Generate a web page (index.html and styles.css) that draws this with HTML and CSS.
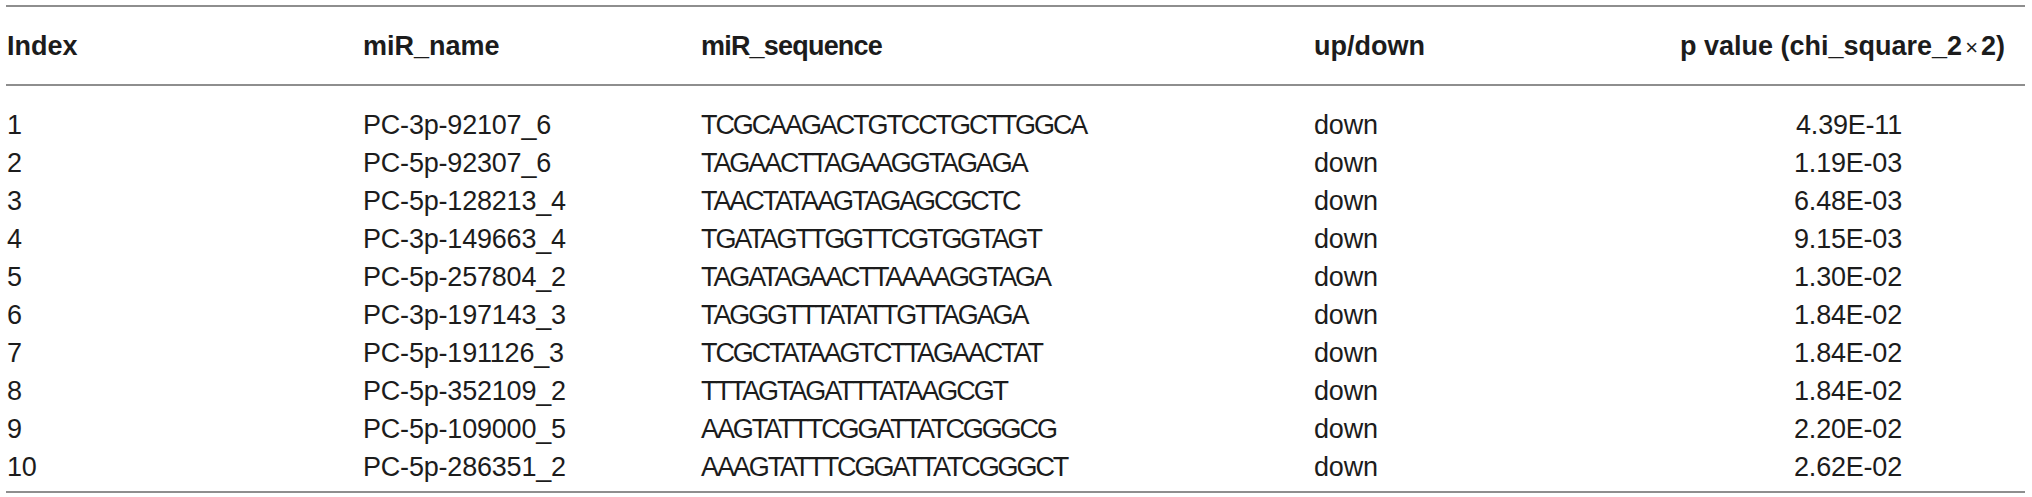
FILE: index.html
```html
<!DOCTYPE html>
<html>
<head>
<meta charset="utf-8">
<link rel="stylesheet" href="styles.css">
</head>
<body>
<table class="mir-table">
  <colgroup>
    <col class="c-index">
    <col class="c-name">
    <col class="c-seq">
    <col class="c-updown">
    <col class="c-p">
  </colgroup>
  <thead>
    <tr>
      <th>Index</th>
      <th>miR_name</th>
      <th class="seq-head">miR_sequence</th>
      <th>up/down</th>
      <th class="pcol">p value (chi_square_2<span class="times">×</span>2)</th>
    </tr>
  </thead>
  <tbody>
    <tr><td>1</td><td>PC-3p-92107_6</td><td class="seq">TCGCAAGACTGTCCTGCTTGGCA</td><td>down</td><td class="pcol">4.39E-11</td></tr>
    <tr><td>2</td><td>PC-5p-92307_6</td><td class="seq">TAGAACTTAGAAGGTAGAGA</td><td>down</td><td class="pcol">1.19E-03</td></tr>
    <tr><td>3</td><td>PC-5p-128213_4</td><td class="seq">TAACTATAAGTAGAGCGCTC</td><td>down</td><td class="pcol">6.48E-03</td></tr>
    <tr><td>4</td><td>PC-3p-149663_4</td><td class="seq">TGATAGTTGGTTCGTGGTAGT</td><td>down</td><td class="pcol">9.15E-03</td></tr>
    <tr><td>5</td><td>PC-5p-257804_2</td><td class="seq">TAGATAGAACTTAAAAGGTAGA</td><td>down</td><td class="pcol">1.30E-02</td></tr>
    <tr><td>6</td><td>PC-3p-197143_3</td><td class="seq">TAGGGTTTATATTGTTAGAGA</td><td>down</td><td class="pcol">1.84E-02</td></tr>
    <tr><td>7</td><td>PC-5p-191126_3</td><td class="seq">TCGCTATAAGTCTTAGAACTAT</td><td>down</td><td class="pcol">1.84E-02</td></tr>
    <tr><td>8</td><td>PC-5p-352109_2</td><td class="seq">TTTAGTAGATTTATAAGCGT</td><td>down</td><td class="pcol">1.84E-02</td></tr>
    <tr><td>9</td><td>PC-5p-109000_5</td><td class="seq">AAGTATTTCGGATTATCGGGCG</td><td>down</td><td class="pcol">2.20E-02</td></tr>
    <tr><td>10</td><td>PC-5p-286351_2</td><td class="seq">AAAGTATTTCGGATTATCGGGCT</td><td>down</td><td class="pcol">2.62E-02</td></tr>
  </tbody>
</table>
</body>
</html>
```

FILE: styles.css
```css
html, body {
  margin: 0;
  padding: 0;
  background: #ffffff;
}

body {
  font-family: "Liberation Sans", Arial, sans-serif;
  color: #1c1c1c;
}

.mir-table {
  margin: 5px 0 0 6px;
  width: 2019px;
  table-layout: fixed;
  border-collapse: collapse;
  font-size: 27px;
  line-height: 38px;
}

.c-index { width: 356px; }
.c-name { width: 338px; }
.c-seq { width: 613px; }
.c-updown { width: 360px; }
.c-p { width: 352px; }

.mir-table th,
.mir-table td {
  padding: 0 0 0 1px;
  text-align: left;
  white-space: nowrap;
  vertical-align: top;
}

.mir-table td {
  letter-spacing: -0.2px;
}

.mir-table th {
  font-weight: bold;
  padding-top: 20px;
  padding-bottom: 17px;
  border-top: 2px solid #8e8e8e;
  border-bottom: 2px solid #8e8e8e;
}

.mir-table th.seq-head {
  letter-spacing: -0.8px;
}

.mir-table td.seq {
  letter-spacing: -2.1px;
}

.mir-table tbody tr:first-child td {
  padding-top: 20px;
}

.mir-table tbody tr:last-child td {
  padding-bottom: 5px;
  border-bottom: 2px solid #8e8e8e;
}

.mir-table th.pcol {
  text-align: right;
  padding-right: 20px;
}

.mir-table td.pcol {
  text-align: right;
  padding-right: 123px;
}

.times {
  font-weight: normal;
  font-size: 22px;
  padding: 0 3px;
}
```
